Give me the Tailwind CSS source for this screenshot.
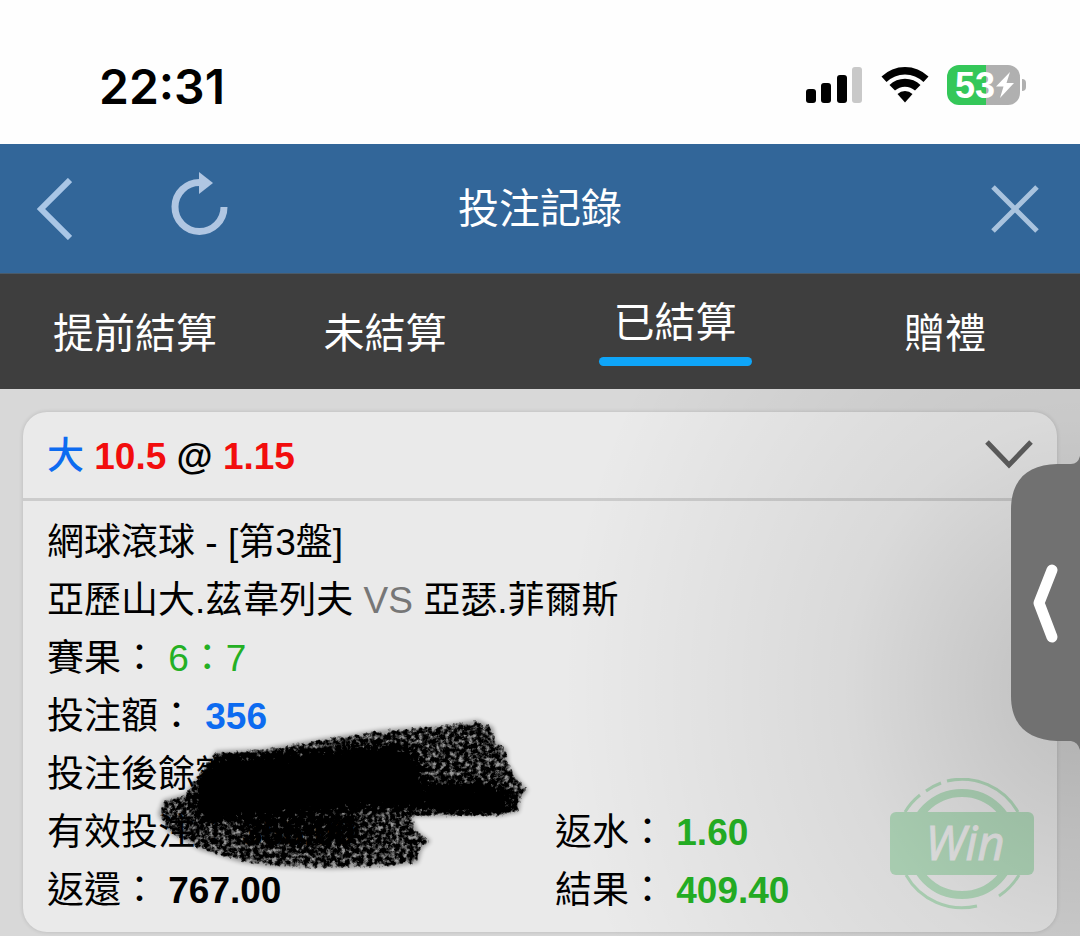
<!DOCTYPE html>
<html lang="zh-Hant">
<head>
    <meta charset="UTF-8">
    <meta name="viewport" content="width=device-width, initial-scale=1.0">
    <title>投注記錄</title>
    <script src="https://cdn.jsdelivr.net/npm/@tailwindcss/browser@4"></script>
</head>
<body class="relative min-h-screen flex flex-col overflow-x-hidden bg-[#d8d8d8] text-black font-['Liberation_Sans','Noto_Sans_CJK_TC',sans-serif]">
    <!-- Status bar -->
    <div class="h-36 shrink-0 flex items-center justify-between bg-[#fefefe] pl-[99px] pr-[54px] pt-[26px]">
        <span class="font-['Inter',sans-serif] font-semibold text-[48px] leading-[60px] pt-1">22:31</span>
        <div class="flex items-center gap-[18px]">
            <svg class="w-[57px] h-[38px]" viewBox="0 0 57 38">
                <rect x="0" y="23" width="10" height="14" rx="3"/>
                <rect x="15" y="17" width="10" height="20" rx="3"/>
                <rect x="31" y="9" width="10" height="28" rx="3"/>
                <rect x="46" y="1" width="10" height="36" rx="3" fill="#c9c9c9"/>
            </svg>
            <svg class="w-[48px] h-[38px]" viewBox="0 0 48 38">
                <path d="M0.500 10.500A34 34 0 0 1 47.500 10.500L42.500 16A26.500 26.500 0 0 0 5.500 16Z"/>
                <path d="M8.500 19A22.300 22.300 0 0 1 39.500 19L34 24.500A15 15 0 0 0 14 24.500Z"/>
                <path d="M16.500 28A11 11 0 0 1 31.500 28L24 36.500Z"/>
            </svg>
            <!-- Battery -->
            <div class="flex items-center">
                <div class="w-[73px] h-10 flex items-center rounded-xl bg-linear-to-r from-[#34c759] from-53% to-[#b0b0b0] to-53% pl-2 text-white">
                    <span class="font-bold text-[36px] leading-10 pt-[2px]">53</span>
                    <svg class="w-5 h-7" viewBox="0 0 20 28" fill="#fff">
                        <path d="M15 1L1 15.500H8.500L5 27L19 12H11.500Z"/>
                    </svg>
                </div>
                <div class="w-1 h-3 ml-[2px] rounded-r-full bg-[#b0b0b0]"></div>
            </div>
        </div>
    </div>

    <!-- Title bar -->
    <header class="h-[130px] shrink-0 grid grid-cols-3 items-center bg-[#326699] px-9 border-b border-[#4a5a68]">
        <div class="flex items-center gap-24">
            <button aria-label="返回">
                <svg class="w-9 h-[62px]" viewBox="0 0 36 62" fill="none" stroke="#a9c6e6" stroke-width="6">
                    <path d="M34 2L5 31L34 60"/>
                </svg>
            </button>
            <button aria-label="重新整理">
                <svg class="w-[60px] h-[74px]" viewBox="0 0 60 74" fill="none">
                    <path d="M32 10.500A24.500 24.500 0 1 0 56 35" stroke="#b0c6e2" stroke-width="7"/>
                    <path d="M31 0L45 11L31 22Z" fill="#b0c6e2"/>
                </svg>
            </button>
        </div>
        <h1 class="text-center text-white text-[41px] leading-[60px]">投注記錄</h1>
        <button class="justify-self-end mr-[5px]" aria-label="關閉">
            <svg class="w-[48px] h-[48px]" viewBox="0 0 48 48" fill="none" stroke="#a9c3de" stroke-width="5">
                <path d="M2 2L46 46M46 2L2 46"/>
            </svg>
        </button>
    </header>

    <!-- Tabs -->
    <nav class="h-[115px] shrink-0 grid grid-cols-4 items-center bg-[#3e3e3e] text-white text-[41px] leading-[60px] text-center">
        <a href="#" class="pt-1">提前結算</a>
        <a href="#" class="pt-1 pr-10">未結算</a>
        <a href="#" class="justify-self-center w-[153px] pb-1" aria-current="page">
            已結算
            <span class="block h-[9px] mt-1 rounded-full bg-[#0fa5f8]"></span>
        </a>
        <a href="#" class="pt-1">贈禮</a>
    </nav>

    <!-- Bet record -->
    <main class="relative grow px-[23px] pt-[23px] overflow-hidden">
        <article class="relative rounded-3xl bg-[#eaeaea] shadow-[0_0_4px_rgba(0,0,0,0.15)]">
            <div class="flex items-center justify-between h-[89px] px-6 border-b-3 border-[#cccccc] font-bold text-[37px]">
                <h2 class="pt-[3px]"><span class="text-[#0d6bf0] font-medium">大</span> <span class="text-[#f20d0d]">10.5</span> @ <span class="text-[#f20d0d]">1.15</span></h2>
                <button aria-label="收合">
                    <svg class="w-[48px] h-[30px]" viewBox="0 0 48 30" fill="none" stroke="#606060" stroke-width="5">
                        <path d="M2 2L24 25L46 2"/>
                    </svg>
                </button>
            </div>
            <div class="px-6 pt-[13px] pb-3 text-[37px] leading-[58px]">
                <p>網球滾球 - [第3盤]</p>
                <p>亞歷山大.茲韋列夫 <span class="text-[#777]">VS</span> 亞瑟.菲爾斯</p>
                <p>賽果： <span class="text-[#24b024]">6：7</span></p>
                <p>投注額： <b class="text-[#0d6bf0]">356</b></p>
                <p>投注後餘額：</p>
                <div class="grid grid-cols-2 gap-x-[30px]">
                    <p>有效投注： <b>356.00</b></p>
                    <p>返水： <b class="text-[#24b024]">1.60</b></p>
                    <p>返還： <b>767.00</b></p>
                    <p>結果： <b class="text-[#24b024]">409.40</b></p>
                </div>
            </div>

            <!-- Marker scribble over the balance -->
            <svg class="absolute left-[127px] bottom-[53px] w-[390px] h-[170px]" viewBox="150 710 390 170">
                <defs>
                    <filter id="charcoal" filterUnits="userSpaceOnUse" x="150" y="710" width="390" height="170" color-interpolation-filters="sRGB">
                        <feTurbulence type="fractalNoise" baseFrequency="0.22" numOctaves="4" seed="7" result="noise"/>
                        <feComposite in="SourceGraphic" in2="noise" operator="arithmetic" k1="0" k2="4" k3="3" k4="-3.1"/>
                        <feColorMatrix values="0 0 0 0 0  0 0 0 0 0  0 0 0 0 0  0 0 0 1 0"/>
                    </filter>
                    <filter id="soft1" x="-10%" y="-10%" width="120%" height="120%"><feGaussianBlur stdDeviation="2"/></filter>
                    <filter id="soft2" x="-20%" y="-40%" width="140%" height="180%"><feGaussianBlur stdDeviation="7"/></filter>
                    <path id="stroke" d="M216 752L260 750L320 740L380 731L440 726L478 721L493 728L496 742L507 750L508 764L517 778L528 791L521 800L519 813L500 817L412 818L418 832L431 842L422 850L418 864L390 868L330 870L270 868L240 863L200 851L168 833L158 815L163 801L185 795L200 775Z"/>
                </defs>
                <use href="#stroke" filter="url(#soft1)" opacity="0.35"/>
                <g filter="url(#charcoal)">
                    <use href="#stroke" filter="url(#soft1)" opacity="0.6"/>
                    <path filter="url(#soft2)" d="M212 764L300 758L400 750L415 760L420 790L480 788L510 798L508 812L380 804L300 810L240 814L205 820L195 800Z"/>
                    <path filter="url(#soft2)" opacity="0.3" d="M230 815L350 810L360 845L260 842Z"/>
                </g>
            </svg>

            <!-- Win stamp -->
            <svg class="absolute right-[23px] bottom-[22px] w-36 h-[132px]" viewBox="0 0 144 132" fill="none" stroke="#b3dabc" role="img" aria-label="Win">
                <circle cx="72" cy="66" r="51" stroke-width="8"/>
                <g stroke-width="3">
                    <path d="M15 34A64.500 64.500 0 0 1 30 17"/>
                    <path d="M36 13A64.500 64.500 0 0 1 51 5"/>
                    <path d="M57 3A64.500 64.500 0 0 1 128 34"/>
                    <path d="M129 97A64.500 64.500 0 0 1 109 118"/>
                    <path d="M87 128A64.500 64.500 0 0 1 16 97"/>
                </g>
                <rect x="0" y="34" width="144" height="63" rx="6" fill="#b3dabc" stroke="none"/>
                <text x="75" y="82" text-anchor="middle" fill="#ececec" stroke="#ececec" stroke-width="1" class="font-['Open_Sans',sans-serif] italic font-medium text-[47px]">Win</text>
            </svg>
        </article>
        <!-- Shadow cast by the side handle -->
        <div class="absolute inset-0 pointer-events-none bg-[radial-gradient(520px_600px_at_100%_300px,rgba(0,0,0,0.19),rgba(0,0,0,0.07)_45%,transparent)]"></div>
    </main>

    <!-- Side handle -->
    <button class="absolute right-0 top-[452px]" aria-label="展開">
        <svg class="w-[69px] h-[302px]" viewBox="0 0 69 302" fill="none">
            <path d="M69 4Q67 12 60 12H46C18 13 0 26 0 58V244C0 274 18 288 46 289H60Q67 290 69 298Z" fill="#717171"/>
            <path d="M41 118L28 151L41 185" stroke="#fff" stroke-width="11" stroke-linecap="round" stroke-linejoin="round"/>
        </svg>
    </button>
</body>
</html>
